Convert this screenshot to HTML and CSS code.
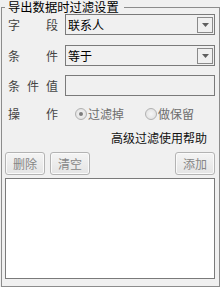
FILE: index.html
```html
<!DOCTYPE html>
<html lang="zh-CN">
<head>
<meta charset="utf-8">
<title>导出数据时过滤设置</title>
<link rel="stylesheet" href="styles.css">
</head>
<body>
<fieldset class="filter">
  <legend class="filter-title">导出数据时过滤设置</legend>

  <div class="row row-field">
    <div class="label"><span>字</span><span>段</span></div>
    <div class="combo">
      <span class="combo-value">联系人</span>
      <span class="combo-btn"><svg width="7" height="4" viewBox="0 0 7 4"><polygon points="0,0 7,0 3.5,4" fill="#5f5f5f"/></svg></span>
    </div>
  </div>

  <div class="row row-cond">
    <div class="label"><span>条</span><span>件</span></div>
    <div class="combo">
      <span class="combo-value">等于</span>
      <span class="combo-btn"><svg width="7" height="4" viewBox="0 0 7 4"><polygon points="0,0 7,0 3.5,4" fill="#5f5f5f"/></svg></span>
    </div>
  </div>

  <div class="row row-value">
    <div class="label"><span>条</span><span>件</span><span>值</span></div>
    <div class="textbox"></div>
  </div>

  <div class="row row-op">
    <div class="label"><span>操</span><span>作</span></div>
    <div class="radios">
      <span class="radio checked"><span class="radio-dot"></span></span><span class="radio-text">过滤掉</span>
      <span class="radio radio-second"></span><span class="radio-text">做保留</span>
    </div>
  </div>

  <div class="help">高级过滤使用帮助</div>

  <div class="actions">
    <button class="btn">删除</button>
    <button class="btn btn-clear">清空</button>
    <button class="btn btn-add">添加</button>
  </div>

  <div class="list"></div>
</fieldset>
</body>
</html>
```

FILE: styles.css
```css
html, body {
  margin: 0;
  padding: 0;
  background: #f0f0f0;
}

body {
  width: 220px;
  height: 287px;
  overflow: hidden;
  font-family: "Noto Sans CJK SC", "Noto Sans", sans-serif;
  font-size: 12px;
  color: #000;
}

.filter {
  margin: 0 0 0 1px;
  width: 219px;
  height: 287px;
  box-sizing: border-box;
  border: 1px solid #8c8c8c;
  padding: 0 4px 0 3px;
  min-inline-size: 0;
}

.filter-title {
  padding: 0 5px 0 3px;
  font-size: 12.3px;
  line-height: 14px;
  height: 14px;
  color: #000;
}

.row {
  display: flex;
  align-items: center;
  height: 21px;
}

.row-field { margin-top: 0; }
.row-cond { margin-top: 10px; }
.row-value { margin-top: 9px; }
.row-op { margin-top: 10px; height: 16px; }

.label {
  width: 50px;
  margin-left: 3px;
  margin-right: 7px;
  display: flex;
  justify-content: space-between;
  color: #444;
  line-height: 14px;
}

.combo {
  width: 150px;
  height: 21px;
  box-sizing: border-box;
  border: 1px solid #7a7a7a;
  background: #f0f0f0;
  display: flex;
  align-items: flex-start;
}

.combo-value {
  flex: 1;
  padding-left: 2px;
  line-height: 19px;
  color: #000;
}

.combo-btn {
  width: 16px;
  height: 16px;
  box-sizing: border-box;
  border: 1px solid #8a8a8a;
  background: #f0f0f0;
  margin: 2px 1px 0 0;
  display: flex;
  align-items: center;
  justify-content: center;
}

.textbox {
  width: 150px;
  height: 21px;
  box-sizing: border-box;
  border: 1px solid #7a7a7a;
  background: #f0f0f0;
}

.radios {
  display: flex;
  align-items: center;
  padding-left: 10px;
  height: 16px;
}

.radio {
  width: 12px;
  height: 12px;
  box-sizing: border-box;
  border-radius: 50%;
  border: 1px solid #b1b1b1;
  background: radial-gradient(circle at 50% 50%, #f6f6f6 0%, #e4e4e4 70%, #d9d9d9 100%);
  display: flex;
  align-items: center;
  justify-content: center;
}

.radio-dot {
  width: 4px;
  height: 4px;
  border-radius: 50%;
  background: #7c7c7c;
}

.radio-text {
  margin-left: 1px;
  color: #6d6d6d;
  line-height: 14px;
}

.radio-second {
  margin-left: 21px;
}

.help {
  margin-top: 9px;
  height: 14px;
  line-height: 14px;
  text-align: right;
  padding-right: 8px;
  color: #111;
}

.actions {
  margin-top: 7px;
  display: flex;
  height: 23px;
}

.btn {
  width: 40px;
  height: 23px;
  box-sizing: border-box;
  margin: 0;
  padding: 0;
  border: 1px solid #b3b3b3;
  border-radius: 3px;
  background: linear-gradient(#f4f4f4, #e4e4e4);
  box-shadow: inset 0 0 0 1px #fafafa;
  font-family: inherit;
  font-size: 12px;
  line-height: 20px;
  color: #868686;
}

.btn-clear { margin-left: 5px; }
.btn-add { margin-left: auto; }

.list {
  margin-top: 3px;
  height: 101px;
  box-sizing: border-box;
  border: 1px solid #7a7a7a;
  background: #fff;
}
```
